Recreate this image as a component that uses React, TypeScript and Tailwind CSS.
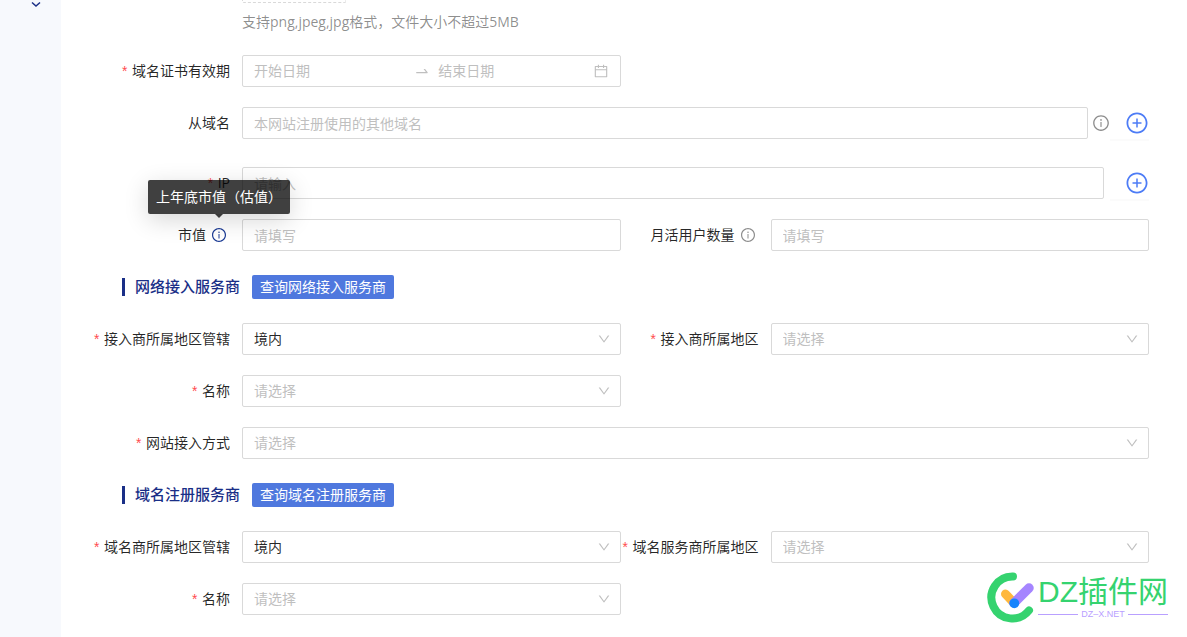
import React from "react";
import {
  AiOutlineCalendar,
  AiOutlineDown,
  AiOutlineInfoCircle,
  AiOutlinePlusCircle,
  AiOutlineSwapRight,
} from "react-icons/ai";

const control =
  "h-8 w-full min-w-0 rounded-xs border border-[#d9d9d9] bg-white px-[11px] text-sm text-black/85 outline-none placeholder:text-[#bfbfbf] focus:border-[#4f78de]";

type FieldProps = {
  id: string;
  label: string;
  required?: boolean;
  icon?: React.ReactNode;
  children: React.ReactNode;
};

function Field({ id, label, required, icon, children }: FieldProps) {
  return (
    <div className="flex min-w-0 items-center">
      <div className="flex w-[150px] shrink-0 items-center justify-end pr-3">
        <label htmlFor={id} className="flex items-center gap-[3px] whitespace-nowrap">
          {required && (
            <span className="pt-1 font-['Liberation_Mono',monospace] text-sm leading-4 text-[#ff4d4f]">*</span>
          )}
          {label}
        </label>
        {icon}
      </div>
      <div className="flex min-w-0 flex-1 items-center">{children}</div>
    </div>
  );
}

function Select({ id, options, initial = "" }: { id: string; options: string[]; initial?: string }) {
  const [value, setValue] = React.useState(initial);

  return (
    <div className="relative w-full">
      <select
        id={id}
        value={value}
        onChange={(e) => setValue(e.target.value)}
        className={`${control} appearance-none ${value ? "" : "text-[#bfbfbf]!"}`}
      >
        <option value="" disabled>
          请选择
        </option>
        {options.map((o) => (
          <option key={o} value={o}>
            {o}
          </option>
        ))}
      </select>
      <AiOutlineDown className="pointer-events-none absolute top-[9px] right-[10px] size-3.5 text-[#bfbfbf]" />
    </div>
  );
}

function SectionTitle({ title, action }: { title: string; action: string }) {
  return (
    <div className="flex h-8 items-center pl-[30px]">
      <span className="h-[18px] w-[3px] bg-[#1a2f87]" />
      <h2 className="ml-[10px] text-[15px] font-medium text-[#1a2f87]">{title}</h2>
      <button
        type="button"
        className="ml-3 h-6 rounded-xs bg-[#4f78de] px-2 text-sm leading-6 text-white"
      >
        {action}
      </button>
    </div>
  );
}

function AddButton({ label }: { label: string }) {
  return (
    <button
      type="button"
      aria-label={label}
      className="h-8 shrink-0 pl-[15px] text-[#4d7cf6] shadow-[0_2px_0_rgba(0,0,0,0.016)]"
    >
      <AiOutlinePlusCircle className="size-6" />
    </button>
  );
}

function Logo() {
  return (
    <div className="pointer-events-none absolute right-[19px] bottom-[14px] flex items-start gap-1">
      <svg width="47" height="52" viewBox="0 0 47 52" fill="none" strokeLinecap="round">
        <path d="M26 5.500A21 21 0 1 0 42 39.400" stroke="#35d36f" strokeWidth="8" />
        <path d="M18.500 23L27 32" stroke="#ffb83d" strokeWidth="9" />
        <path d="M42 17L27 32" stroke="#a585ff" strokeWidth="9.500" />
        <circle cx="27.300" cy="32.300" r="4.900" fill="#1684fc" />
      </svg>
      <div className="flex flex-col pt-1">
        <span className="font-['Liberation_Sans','Noto_Sans_CJK_SC',sans-serif] text-[30px] leading-[34px] whitespace-nowrap text-[#35d36f]">
          DZ插件网
        </span>
        <span className="flex items-center gap-[3px] font-['Liberation_Sans',sans-serif] text-[9px] leading-[10px] text-[#b9a0ff]">
          <span className="h-px flex-1 bg-[#b9a0ff]" />
          DZ–X.NET
          <span className="h-px flex-1 bg-[#b9a0ff]" />
        </span>
      </div>
    </div>
  );
}

export default function App() {
  return (
    <div className="relative flex min-h-screen bg-white font-['Open_Sans','Noto_Sans_CJK_SC',sans-serif] text-sm text-black/85">
      <aside className="flex w-[61px] shrink-0 justify-end bg-[#f7f9fd] pr-5">
        <svg width="10" height="10" viewBox="0 0 10 10" fill="none" stroke="#1a2f87" strokeWidth="1.500">
          <path d="M1 2.500L5 6L9 2.500" />
        </svg>
      </aside>

      <main className="min-w-0 flex-1 pr-[38px] pl-[31px]">
        <form className="flex flex-col gap-5" onSubmit={(e) => e.preventDefault()}>
          <div className="pb-0.5 pl-[150px]">
            <div className="h-[3px] w-[104px] rounded-b-xs border border-t-0 border-dashed border-[#d9d9d9]" />
            <p className="mt-2 leading-[22px] text-black/45">
              支持png,jpeg,jpg格式，文件大小不超过5MB
            </p>
          </div>

          <div className="grid grid-cols-2">
            <Field id="start" label="域名证书有效期" required>
              <div className="flex h-8 w-full items-center rounded-xs border border-[#d9d9d9] px-[11px] text-[#bfbfbf]">
                <input
                  id="start"
                  placeholder="开始日期"
                  className="min-w-0 flex-1 outline-none placeholder:text-[#bfbfbf]"
                />
                <AiOutlineSwapRight className="mx-2 size-4 shrink-0" />
                <input
                  aria-label="结束日期"
                  placeholder="结束日期"
                  className="min-w-0 flex-1 outline-none placeholder:text-[#bfbfbf]"
                />
                <AiOutlineCalendar className="ml-0.5 size-4 shrink-0" />
              </div>
            </Field>
          </div>

          <Field id="domain" label="从域名">
            <input id="domain" placeholder="本网站注册使用的其他域名" className={control} />
            <AiOutlineInfoCircle className="ml-1 size-[18px] shrink-0 text-black/45" />
            <AddButton label="添加从域名" />
          </Field>

          <div className="pt-2">
            <Field id="ip" label="IP" required>
              <input id="ip" placeholder="请输入" className={`${control} mr-1.5`} />
              <AddButton label="添加IP" />
            </Field>
          </div>

          <div className="grid grid-cols-2">
            <Field
              id="value"
              label="市值"
              icon={
                <span className="relative mr-[3px] ml-[5px]">
                  <AiOutlineInfoCircle className="size-4 text-[#1a3a94]" />
                  <span
                    role="tooltip"
                    className="absolute bottom-[29px] left-1/2 -translate-x-1/2 rounded-xs bg-black/75 px-2 py-1.5 leading-[22px] whitespace-nowrap text-white shadow-[0_6px_24px_rgba(0,0,0,0.16)]"
                  >
                    上年底市值（估值）
                    <span className="absolute top-full left-1/2 -translate-x-1/2 border-x-4 border-t-4 border-x-transparent border-t-black/75" />
                  </span>
                </span>
              }
            >
              <input id="value" placeholder="请填写" className={control} />
            </Field>
            <Field
              id="users"
              label="月活用户数量"
              icon={<AiOutlineInfoCircle className="mr-[3px] ml-[5px] size-4 text-black/45" />}
            >
              <input id="users" placeholder="请填写" className={control} />
            </Field>
          </div>

          <SectionTitle title="网络接入服务商" action="查询网络接入服务商" />

          <div className="grid grid-cols-2 gap-y-5">
            <Field id="isp-scope" label="接入商所属地区管辖" required>
              <Select id="isp-scope" options={["境内", "境外"]} initial="境内" />
            </Field>
            <Field id="isp-area" label="接入商所属地区" required>
              <Select id="isp-area" options={[]} />
            </Field>
            <Field id="isp-name" label="名称" required>
              <Select id="isp-name" options={[]} />
            </Field>
          </div>

          <Field id="isp-method" label="网站接入方式" required>
            <Select id="isp-method" options={[]} />
          </Field>

          <SectionTitle title="域名注册服务商" action="查询域名注册服务商" />

          <div className="grid grid-cols-2 gap-y-5">
            <Field id="reg-scope" label="域名商所属地区管辖" required>
              <Select id="reg-scope" options={["境内", "境外"]} initial="境内" />
            </Field>
            <Field id="reg-area" label="域名服务商所属地区" required>
              <Select id="reg-area" options={[]} />
            </Field>
            <Field id="reg-name" label="名称" required>
              <Select id="reg-name" options={[]} />
            </Field>
          </div>
        </form>
      </main>

      <Logo />
    </div>
  );
}
